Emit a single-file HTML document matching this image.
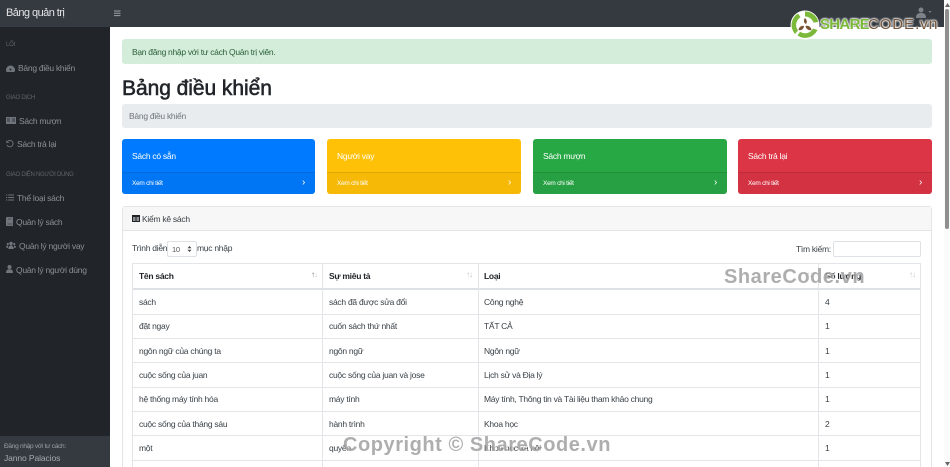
<!DOCTYPE html>
<html lang="vi"><head><meta charset="utf-8"><title>Bảng quản trị</title>
<style>
*{box-sizing:border-box}
html,body{margin:0;padding:0;width:950px;height:467px;overflow:hidden;background:#fff}
body{font-family:"Liberation Sans","Noto Sans CJK SC",sans-serif;font-size:8.5px;color:#212529;position:relative;letter-spacing:-.27px}
.a{position:absolute;white-space:nowrap}
#top{left:0;top:0;width:944px;height:27px;background:#343a40}
#side{left:0;top:27px;width:110px;height:440px;background:#212529}
#foot{left:0;top:436px;width:110px;height:31px;background:#343a40}
.h{color:#5f656b;font-size:6px;left:6px}
.n{color:#8b9096;font-size:8.5px}
.ic{position:absolute;fill:#6f757b}
.card{top:139px;height:55px;border-radius:3px;color:#fff;overflow:hidden}
.card .f{position:absolute;left:0;right:0;top:33px;height:22px;background:rgba(0,0,0,.04);border-top:1px solid rgba(0,0,0,.1)}
.card .t{position:absolute;left:10px;top:12px;font-size:8.5px;white-space:nowrap}
.card .m{position:absolute;left:10px;top:7px;font-size:6.5px;white-space:nowrap}
.card .g{position:absolute;right:10px;top:4px;font-size:10px}
.ln{background:#e3e5e8}
.c{font-size:8.5px;color:#3a4046}
.b{font-weight:700;color:#212529}
.w{font-weight:700;color:rgba(135,135,135,.68);text-shadow:1px 1px 1px rgba(255,255,255,.8);font-size:20px;letter-spacing:.55px}
.s{color:#c4c6c9;font-size:8px;letter-spacing:-1px}
.lg{line-height:20px;top:15px;text-shadow:0 0 1px #fff,0 0 2px #fff,0 0 2px #fff,0 0 2px #fff}
</style></head><body>
<div class="a" id="top"></div>
<div class="a" style="left:6px;top:7px;color:#e4e6e8;font-size:11px;letter-spacing:-.55px">Bảng quản trị</div>
<svg class="a" style="left:114px;top:10px" width="7" height="7" viewBox="0 0 7 7"><path d="M0 1h6.500M0 3.300h6.500M0 5.600h6.500" stroke="#9ca1a6" stroke-width="1"/></svg>
<svg class="a" style="left:916px;top:7px" width="16" height="12" viewBox="0 0 16 12"><circle cx="5" cy="3" r="2.500" fill="#7d8288"/><path d="M0 11c0-4 2-5 5-5s5 1 5 5z" fill="#7d8288"/><path d="M12.500 4h3l-1.500 2z" fill="#7d8288"/></svg>

<div class="a" id="side"></div>
<div class="a h" style="top:42px">LỐI</div>
<svg class="ic" style="left:6px;top:64px" width="9" height="8" viewBox="0 0 9 8"><path d="M0 6a4.500 4.500 0 0 1 9 0c0 1-.4 2-1 2H1C.4 8 0 7 0 6z"/><circle cx="4.500" cy="5.500" r="1" fill="#212529"/></svg>
<div class="a n" style="left:18px;top:63px">Bảng điều khiển</div>
<div class="a h" style="top:95px">GIAO DỊCH</div>
<svg class="ic" style="left:6px;top:117px" width="10" height="7" viewBox="0 0 10 7"><path d="M0 0h10v7H0z"/><path d="M1 2h3M1 4h3M6 2h3M6 4h3" stroke="#212529" stroke-width=".7"/></svg>
<div class="a n" style="left:19px;top:116px">Sách mượn</div>
<svg class="a" style="left:6px;top:140px" width="8" height="8" viewBox="0 0 8 8" fill="none"><path d="M1.500 1.500A3.200 3.200 0 1 1 1 5M.8 .5v2h2" stroke="#6f757b" stroke-width=".9"/></svg>
<div class="a n" style="left:17px;top:139px">Sách trả lại</div>
<div class="a h" style="top:172px">GIAO DIỆN NGƯỜI DÙNG</div>
<svg class="a" style="left:6px;top:194px" width="8" height="7" viewBox="0 0 8 7"><path d="M2.200 1h5.800M2.200 3.500h5.800M2.200 6h5.800M0 1h1.200M0 3.500h1.200M0 6h1.200" stroke="#6f757b" stroke-width=".9"/></svg>
<div class="a n" style="left:17px;top:193px">Thể loại sách</div>
<svg class="ic" style="left:6px;top:217px" width="7" height="9" viewBox="0 0 7 9"><path d="M1 0h6v9H1a1 1 0 0 1-1-1V1a1 1 0 0 1 1-1z"/><path d="M1.500 7h5M2 2h3.500" stroke="#212529" stroke-width=".6"/></svg>
<div class="a n" style="left:16px;top:217px">Quản lý sách</div>
<svg class="ic" style="left:6px;top:241px" width="10" height="8" viewBox="0 0 10 8"><circle cx="5" cy="2.500" r="1.700"/><circle cx="1.800" cy="3" r="1.100"/><circle cx="8.200" cy="3" r="1.100"/><path d="M2.400 8c0-2.500 1-3.500 2.600-3.500S7.600 5.500 7.600 8zM0 6.500c0-1.500.6-2 1.800-2l.4 2.500zM10 6.500c0-1.500-.6-2-1.800-2l-.4 2.500z"/></svg>
<div class="a n" style="left:19px;top:241px">Quản lý người vay</div>
<svg class="ic" style="left:6px;top:265px" width="7" height="8" viewBox="0 0 7 8"><circle cx="3.500" cy="2" r="2"/><path d="M0 8c0-3 1.500-3.800 3.500-3.800S7 5 7 8z"/></svg>
<div class="a n" style="left:16px;top:265px">Quản lý người dùng</div>
<div class="a" id="foot"></div>
<div class="a" style="left:4px;top:443px;font-size:6.5px;color:#9ca1a6">Đăng nhập với tư cách:</div>
<div class="a" style="left:4px;top:453px;font-size:8.5px;letter-spacing:-.1px;color:#a6abb0">Janno Palacios</div>

<div class="a" style="left:122px;top:39px;width:810px;height:25px;background:#d4edda;border-radius:3px"></div>
<div class="a" style="left:132px;top:47px;font-size:8.5px;letter-spacing:-.3px;color:#2a5f38">Bạn đăng nhập với tư cách Quản trị viên.</div>
<div class="a" style="left:122px;top:76px;font-size:21px;line-height:25px;letter-spacing:-.05px;font-weight:400;-webkit-text-stroke:.55px #212529;color:#212529">Bảng điều khiển</div>
<div class="a" style="left:122px;top:104px;width:810px;height:24px;background:#e9ecef;border-radius:3px"></div>
<div class="a" style="left:129px;top:111px;font-size:8.5px;color:#6c757d">Bảng điều khiển</div>

<div class="a card" style="left:122px;width:193px;background:#007bff"><div class="t">Sách có sẵn</div><div class="f"><div class="m">Xem chi tiết</div><div class="g">›</div></div></div>
<div class="a card" style="left:327px;width:194px;background:#ffc107"><div class="t">Người vay</div><div class="f"><div class="m">Xem chi tiết</div><div class="g">›</div></div></div>
<div class="a card" style="left:533px;width:194px;background:#28a745"><div class="t">Sách mượn</div><div class="f"><div class="m">Xem chi tiết</div><div class="g">›</div></div></div>
<div class="a card" style="left:738px;width:194px;background:#dc3545"><div class="t">Sách trả lại</div><div class="f"><div class="m">Xem chi tiết</div><div class="g">›</div></div></div>

<div class="a" style="left:122px;top:206px;width:810px;height:261px;border:1px solid #e4e5e7;border-bottom:0;border-radius:3px 3px 0 0"></div>
<div class="a" style="left:123px;top:207px;width:808px;height:24px;background:#f7f7f7;border-bottom:1px solid #e4e5e7"></div>
<svg class="a" style="left:132px;top:215px" width="8" height="7" viewBox="0 0 8 7"><path d="M0 0h8v7H0z" fill="#212529"/><path d="M1 2.500h2.500v1H1zM4.500 2.500H7v1H4.500zM1 4.500h2.500v1H1zM4.500 4.500H7v1H4.500z" fill="#fff"/></svg>
<div class="a" style="left:142px;top:214px;color:#3a4046">Kiểm kê sách</div>

<div class="a c" style="left:132px;top:243px">Trình diễn</div>
<div class="a" style="left:167px;top:241px;width:30px;height:16px;border:1px solid #dfe2e5;border-radius:2px"></div>
<div class="a" style="left:172px;top:245px;font-size:7.5px;color:#555">10</div>
<svg class="a" style="left:187px;top:246px" width="5" height="6" viewBox="0 0 5 6"><path d="M2.500 0L4.500 2.300H.5zM2.500 6L4.500 3.700H.5z" fill="#444"/></svg>
<div class="a c" style="left:197px;top:243px">mục nhập</div>
<div class="a c" style="left:796px;top:244px">Tìm kiếm:</div>
<div class="a" style="left:833px;top:241px;width:88px;height:16px;border:1px solid #dfe2e5;border-radius:2px"></div>

<div class="a ln" style="left:132px;top:263px;width:789px;height:1px"></div>
<div class="a" style="left:132px;top:288px;width:789px;height:2px;background:#dee2e6"></div>
<div class="a ln" style="left:132px;top:314px;width:789px;height:1px"></div>
<div class="a ln" style="left:132px;top:338px;width:789px;height:1px"></div>
<div class="a ln" style="left:132px;top:362px;width:789px;height:1px"></div>
<div class="a ln" style="left:132px;top:387px;width:789px;height:1px"></div>
<div class="a ln" style="left:132px;top:411px;width:789px;height:1px"></div>
<div class="a ln" style="left:132px;top:435px;width:789px;height:1px"></div>
<div class="a ln" style="left:132px;top:460px;width:789px;height:1px"></div>
<div class="a ln" style="left:132px;top:263px;width:1px;height:204px"></div>
<div class="a ln" style="left:322px;top:263px;width:1px;height:204px"></div>
<div class="a ln" style="left:478px;top:263px;width:1px;height:204px"></div>
<div class="a ln" style="left:818px;top:263px;width:1px;height:204px"></div>
<div class="a ln" style="left:920px;top:263px;width:1px;height:204px"></div>

<div class="a c b" style="left:139px;top:271px">Tên sách</div>
<div class="a s" style="left:311px;top:270px;color:#777">↑<span style="color:#ccc">↓</span></div>
<div class="a c b" style="left:329px;top:271px">Sự miêu tả</div>
<div class="a s" style="left:466px;top:270px">↑↓</div>
<div class="a c b" style="left:484px;top:271px">Loại</div>
<div class="a s" style="left:806px;top:270px">↑↓</div>
<div class="a c b" style="left:825px;top:271px">Số lượng</div>
<div class="a s" style="left:909px;top:270px">↑↓</div>

<div class="a c" style="left:139px;top:297px">sách</div><div class="a c" style="left:329px;top:297px">sách đã được sửa đổi</div><div class="a c" style="left:484px;top:297px">Công nghệ</div><div class="a c" style="left:825px;top:297px">4</div>
<div class="a c" style="left:139px;top:321px">đặt ngay</div><div class="a c" style="left:329px;top:321px">cuốn sách thứ nhất</div><div class="a c" style="left:484px;top:321px">TẤT CẢ</div><div class="a c" style="left:825px;top:321px">1</div>
<div class="a c" style="left:139px;top:346px">ngôn ngữ của chúng ta</div><div class="a c" style="left:329px;top:346px">ngôn ngữ</div><div class="a c" style="left:484px;top:346px">Ngôn ngữ</div><div class="a c" style="left:825px;top:346px">1</div>
<div class="a c" style="left:139px;top:370px">cuộc sống của juan</div><div class="a c" style="left:329px;top:370px">cuộc sống của juan và jose</div><div class="a c" style="left:484px;top:370px">Lịch sử và Địa lý</div><div class="a c" style="left:825px;top:370px">1</div>
<div class="a c" style="left:139px;top:394px">hệ thống máy tính hóa</div><div class="a c" style="left:329px;top:394px">máy tính</div><div class="a c" style="left:484px;top:394px">Máy tính, Thông tin và Tài liệu tham khảo chung</div><div class="a c" style="left:825px;top:394px">1</div>
<div class="a c" style="left:139px;top:419px">cuộc sống của tháng sáu</div><div class="a c" style="left:329px;top:419px">hành trình</div><div class="a c" style="left:484px;top:419px">Khoa học</div><div class="a c" style="left:825px;top:419px">2</div>
<div class="a c" style="left:139px;top:443px">một</div><div class="a c" style="left:329px;top:443px">quyển</div><div class="a c" style="left:484px;top:443px">Khoa học xã hội</div><div class="a c" style="left:825px;top:443px">1</div>

<div class="a w" style="left:724px;top:266px">ShareCode.vn</div>
<div class="a w" style="left:343px;top:434px">Copyright © ShareCode.vn</div>

<svg class="a" style="left:790px;top:10px" width="30" height="30" viewBox="0 0 30 30"><circle cx="15" cy="15" r="14.500" fill="#fff"/><path d="M15 1.500a13.500 13.500 0 0 1 13.300 10.500l-4.800.6A9 9 0 0 0 15 6.500zM27.500 20a13.500 13.500 0 0 1-20 5.500l2.600-3.800A9 9 0 0 0 23 18.500zM5 24A13.500 13.500 0 0 1 8 3.500l2.500 3.800A9 9 0 0 0 8 20.500z" fill="#7cb93a"/><path d="M15 8c2 2 2.500 4 1 6-2-1-3-3.500-1-6zM8.500 20c.5-3 2.500-4.500 5.500-4 0 2.500-2.500 5-5.500 4zM21.500 20c-3 .8-5.500-1-6-4 3-.8 5.500 1 6 4z" fill="#7a5432"/></svg>
<div class="a lg" style="left:820px;font-size:15px;letter-spacing:-.7px;font-weight:700;color:#7cb93a">SHARE</div>
<div class="a lg" style="left:868px;font-size:15px;letter-spacing:.9px;color:#74563c">CODE</div>
<div class="a lg" style="left:915px;font-size:16px;letter-spacing:.6px;color:#74563c">.vn</div>

<div class="a" style="left:944px;top:0;width:6px;height:467px;background:#fbfbfb"></div>
<div class="a" style="left:945px;top:9px;width:4px;height:220px;background:#8f8f8f;border-radius:2px"></div>
<svg class="a" style="left:945px;top:3px" width="5" height="4" viewBox="0 0 5 4"><path d="M2.500 0L5 4H0z" fill="#666"/></svg>
<svg class="a" style="left:945px;top:462px" width="5" height="4" viewBox="0 0 5 4"><path d="M2.500 4L5 0H0z" fill="#666"/></svg>
</body></html>
